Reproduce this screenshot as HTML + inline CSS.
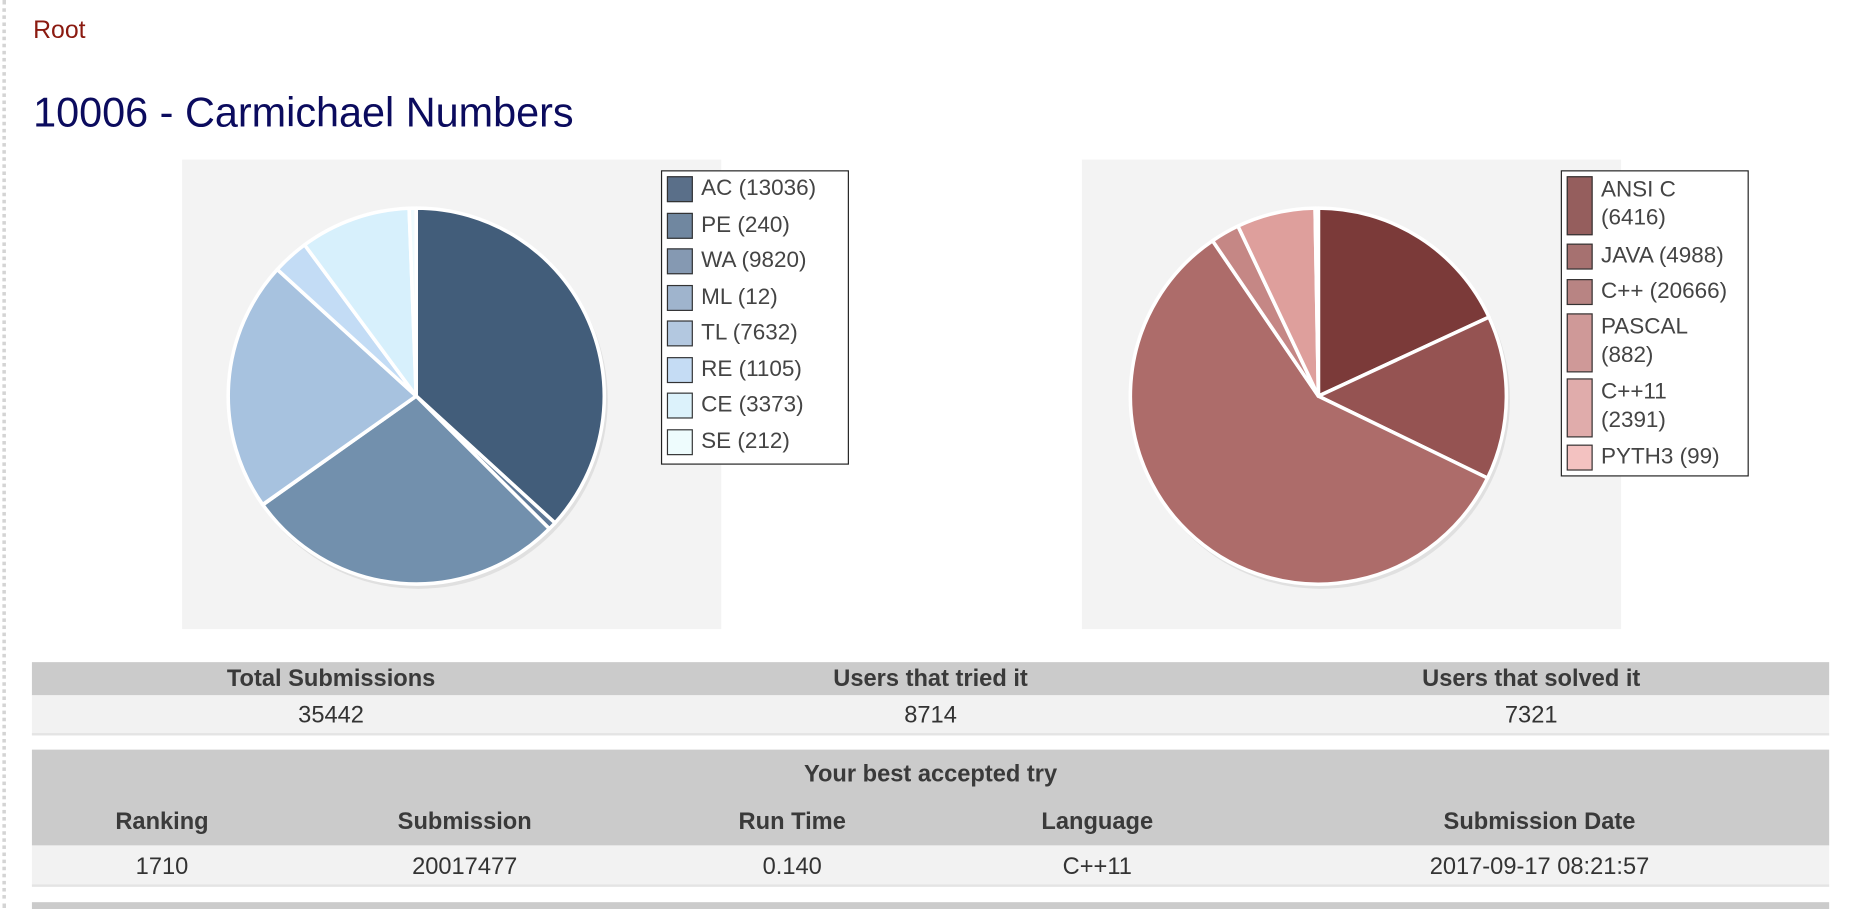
<!DOCTYPE html>
<html><head><meta charset="utf-8"><style>
html,body{margin:0;padding:0;background:#fff;overflow:hidden;width:1854px;height:908px}
#w{position:absolute;left:0;top:0;width:1568px;height:768px;transform:scale(1.18240);transform-origin:0 0;font-family:"Liberation Sans",sans-serif}
.a{position:absolute}
#dl{left:2px;top:0;width:0;height:768px;border-left:3px dotted #d4d4d4}
.lg{position:absolute;border:1.5px solid #222;background:#fff}
.row{position:absolute;left:4px;font-size:19px;color:#444;line-height:22px}
.sw{position:absolute;left:0;width:20px;height:20px;border:1.5px solid #333}
.row span{position:absolute;left:29px;white-space:nowrap}
.bar{position:absolute;left:27px;width:1520px}
.c{position:absolute;transform:translateX(-50%);white-space:nowrap;font-size:20px;color:#333}
.b{font-weight:bold;color:#3a3a3a}
</style></head><body><div id="w">
<div id="dl" class="a"></div>
<div class="a" style="left:28px;top:14px;font-size:21px;color:#8b1a10">Root</div>
<div class="a" style="left:28px;top:76px;font-size:35px;color:#0b0b5e">10006 - Carmichael Numbers</div>

<div class="a" style="left:154px;top:135px;width:456px;height:397px;background:#f3f3f3"></div>
<svg class="a" style="left:154px;top:135px" width="456" height="397">
<circle cx="200" cy="203" r="160" fill="#e0e0e0"/>
<g stroke="#fff" stroke-width="3" stroke-linejoin="round">
<path d="M198 200 L198 41 A159 159 0 0 1 315.4 307.3Z" fill="#425d7a"/>
<path d="M198 200 L315.4 307.3 A159 159 0 0 1 310.6 312.2Z" fill="#5e7896"/>
<path d="M198 200 L310.6 312.2 A159 159 0 0 1 68.3 291.9Z" fill="#7290ad"/>
<path d="M198 200 L68.3 291.9 A159 159 0 0 1 68.1 291.7Z" fill="#8fa9c6"/>
<path d="M198 200 L68.1 291.7 A159 159 0 0 1 80.5 92.9Z" fill="#a7c2df"/>
<path d="M198 200 L80.5 92.9 A159 159 0 0 1 103.6 72.1Z" fill="#c3dcf5"/>
<path d="M198 200 L103.6 72.1 A159 159 0 0 1 192 41.1Z" fill="#d7f0fc"/>
<path d="M198 200 L192 41.1 A159 159 0 0 1 198 41Z" fill="#effbfe"/>
</g></svg>
<div class="lg" style="left:559px;top:144px;width:157px;height:247px">
<div class="row" style="top:4px"><div class="sw" style="background:#5a6f89"></div><span>AC (13036)</span></div>
<div class="row" style="top:34.5px"><div class="sw" style="background:#7087a0"></div><span>PE (240)</span></div>
<div class="row" style="top:65px"><div class="sw" style="background:#8599b2"></div><span>WA (9820)</span></div>
<div class="row" style="top:95.5px"><div class="sw" style="background:#9fb4cd"></div><span>ML (12)</span></div>
<div class="row" style="top:126px"><div class="sw" style="background:#b3c8e0"></div><span>TL (7632)</span></div>
<div class="row" style="top:156.5px"><div class="sw" style="background:#c5dcf4"></div><span>RE (1105)</span></div>
<div class="row" style="top:187px"><div class="sw" style="background:#dcf2fb"></div><span>CE (3373)</span></div>
<div class="row" style="top:217.5px"><div class="sw" style="background:#eefcfd"></div><span>SE (212)</span></div>
</div>

<div class="a" style="left:915px;top:135px;width:456px;height:397px;background:#f3f3f3"></div>
<svg class="a" style="left:915px;top:135px" width="456" height="397">
<circle cx="202" cy="203" r="160" fill="#e0e0e0"/>
<g stroke="#fff" stroke-width="3" stroke-linejoin="round">
<path d="M200 200 L200 41 A159 159 0 0 1 344.3 133.2Z" fill="#7b3a39"/>
<path d="M200 200 L344.3 133.2 A159 159 0 0 1 343.1 269.3Z" fill="#955352"/>
<path d="M200 200 L343.1 269.3 A159 159 0 1 1 110.5 68.6Z" fill="#ad6c6a"/>
<path d="M200 200 L110.5 68.6 A159 159 0 0 1 132 56.2Z" fill="#c58785"/>
<path d="M200 200 L132 56.2 A159 159 0 0 1 197.2 41Z" fill="#de9f9c"/>
<path d="M200 200 L197.2 41 A159 159 0 0 1 200 41Z" fill="#f3bab7"/>
</g></svg>
<div class="lg" style="left:1320px;top:144px;width:157px;height:257px">
<div class="row" style="top:4px;line-height:24px"><div class="sw" style="background:#955e5d;height:48px"></div><span>ANSI C<br>(6416)</span></div>
<div class="row" style="top:61px"><div class="sw" style="background:#a67170"></div><span>JAVA (4988)</span></div>
<div class="row" style="top:91px"><div class="sw" style="background:#b88483"></div><span>C++ (20666)</span></div>
<div class="row" style="top:120px;line-height:24px"><div class="sw" style="background:#cf9998;height:48px"></div><span>PASCAL<br>(882)</span></div>
<div class="row" style="top:175px;line-height:24px"><div class="sw" style="background:#e0acab;height:48px"></div><span>C++11<br>(2391)</span></div>
<div class="row" style="top:231px"><div class="sw" style="background:#f3c2c1"></div><span>PYTH3 (99)</span></div>
</div>

<div class="bar" style="top:560px;height:28px;background:#cbcbcb"></div>
<div class="bar" style="top:588px;height:32px;background:#f2f2f2;border-bottom:2px solid #e4e4e4"></div>
<div class="c b" style="left:280px;top:563px">Total Submissions</div>
<div class="c b" style="left:787px;top:563px">Users that tried it</div>
<div class="c b" style="left:1295px;top:563px">Users that solved it</div>
<div class="c" style="left:280px;top:594px">35442</div>
<div class="c" style="left:787px;top:594px">8714</div>
<div class="c" style="left:1295px;top:594px">7321</div>

<div class="bar" style="top:634px;height:81px;background:#cbcbcb"></div>
<div class="bar" style="top:715px;height:33px;background:#f2f2f2;border-bottom:2px solid #e4e4e4"></div>
<div class="c b" style="left:787px;top:644px">Your best accepted try</div>
<div class="c b" style="left:137px;top:684px">Ranking</div>
<div class="c b" style="left:393px;top:684px">Submission</div>
<div class="c b" style="left:670px;top:684px">Run Time</div>
<div class="c b" style="left:928px;top:684px">Language</div>
<div class="c b" style="left:1302px;top:684px">Submission Date</div>
<div class="c" style="left:137px;top:722px">1710</div>
<div class="c" style="left:393px;top:722px">20017477</div>
<div class="c" style="left:670px;top:722px">0.140</div>
<div class="c" style="left:928px;top:722px">C++11</div>
<div class="c" style="left:1302px;top:722px">2017-09-17 08:21:57</div>
<div class="bar" style="top:763px;height:6px;background:#cbcbcb"></div>
</div></body></html>
